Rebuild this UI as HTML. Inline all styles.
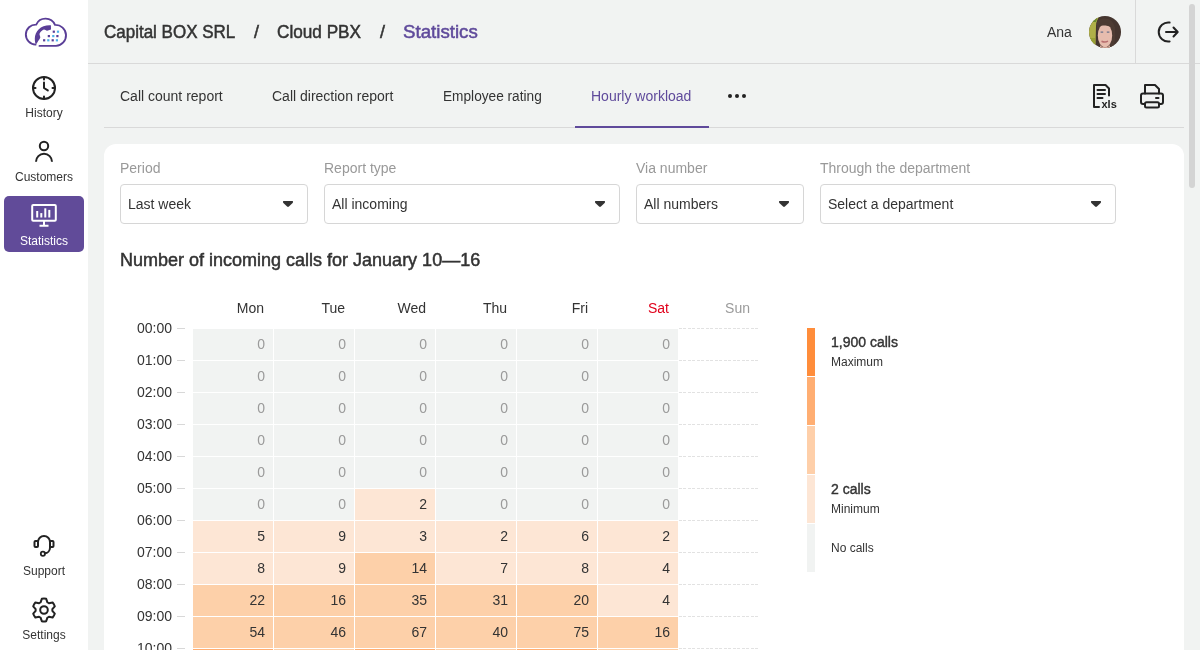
<!DOCTYPE html><html><head><meta charset="utf-8"><style>*{box-sizing:border-box;margin:0;padding:0}
html,body{width:1200px;height:650px;overflow:hidden}
body{background:#f1f3f2;font-family:"Liberation Sans",sans-serif;color:#333;position:relative}
#root{position:absolute;left:0;top:0;width:1200px;height:650px;will-change:transform;overflow:hidden}
#side{position:absolute;left:0;top:0;width:88px;height:650px;background:#fff}
.nav{position:absolute;left:4px;width:80px;height:56px;border-radius:5px}
.nav span{position:absolute;left:0;width:80px;text-align:center;font-size:12px;line-height:14px;color:#333;white-space:nowrap}
.nav.act{background:#614b99}
.nav.act span{color:#fff}
svg.ic{position:absolute;overflow:visible}
#hdr{position:absolute;left:88px;top:0;width:1112px;height:64px;border-bottom:1px solid #d9d9d9}
#vdiv{position:absolute;left:1135px;top:0;width:1px;height:63px;background:#d9d9d9}
.bc{position:absolute;top:21px;font-size:18px;line-height:22px;-webkit-text-stroke:0.5px #333;color:#333;white-space:nowrap;transform-origin:0 0}
.ana{position:absolute;left:1047px;top:24px;font-size:14px;line-height:16px;color:#333}
.tab{position:absolute;top:88px;font-size:14px;line-height:16px;color:#333;white-space:nowrap}
.tab.act{color:#5f4a9b}
#tabline{position:absolute;left:104px;top:127px;width:1080px;height:1px;background:#d9d9d9}
#tabul{position:absolute;left:575px;top:126px;width:134px;height:2px;background:#5f4a9b}
.dot{position:absolute;top:94px;width:4px;height:4px;border-radius:2px;background:#222}
#card{position:absolute;left:104px;top:144px;width:1080px;height:600px;background:#fff;border-radius:12px}
.lbl{position:absolute;top:160px;font-size:14px;line-height:16px;color:#999;white-space:nowrap}
.sel{position:absolute;top:184px;height:40px;border:1px solid #d6d6d6;border-radius:4px;background:#fff}
.sel span{position:absolute;left:7px;top:11px;font-size:14px;line-height:16px;color:#333;white-space:nowrap}
.sel svg{position:absolute;right:14px;top:16px}
#title{position:absolute;left:120px;top:249px;font-size:18px;line-height:22px;-webkit-text-stroke:0.5px #333;color:#333;white-space:nowrap}
.day{position:absolute;top:300px;width:80px;text-align:right;padding-right:9px;font-size:14px;line-height:16px;color:#333}
.hr{position:absolute;left:112px;width:60px;text-align:right;font-size:14px;line-height:16px;color:#333}
.tick{position:absolute;left:177px;width:8px;height:1px;background:#d8d8d8}
.c{position:absolute;width:80px;height:31px;text-align:right;padding-right:8px;font-size:14px;line-height:31px;color:#333}
.z{background:#f1f3f2;color:#9a9a9a}
.l1{background:#fde6d5}
.l2{background:#fdd0a9}
.l3{background:#ffae72}
.dash{position:absolute;left:679px;width:80px;height:1px;background:repeating-linear-gradient(90deg,#e2e2e2 0 3px,transparent 3px 4.5px)}
.seg{position:absolute;left:807px;width:8px;height:48px}
.lg1{position:absolute;left:831px;font-size:14px;line-height:16px;-webkit-text-stroke:0.4px #333;color:#333;white-space:nowrap}
.lg2{position:absolute;left:831px;font-size:12px;line-height:14px;color:#333;white-space:nowrap}
#sb{position:absolute;left:1189px;top:4px;width:6px;height:184px;border-radius:3px;background:#d4d4d4}
</style></head><body><div id="root">
<div id="side">
<svg class="ic" style="left:0;top:0" width="88" height="64" viewBox="0 0 88 64">
<path d="M39.5 45.9H56A10.4 10.4 0 1 0 55 24.9A10.3 10.3 0 0 0 36.2 24.6A10 10 0 0 0 35.5 44.6" fill="none" stroke="#5a3e97" stroke-width="1.9" stroke-linecap="round" stroke-linejoin="round"/>
<path d="M50.9 25.3C46.5 24.9 41.5 26.4 38.8 29.2C36.3 31.8 34.8 35 34.8 38.5C34.8 41 35.2 43 35.8 44.8L37.5 42.3C38.2 40.9 39.8 39.2 40.3 37.6C40.4 36.2 39.4 35 39.5 33.9C39.9 32.6 40.8 31.6 41.6 30.9C42.4 30.2 43.2 29.6 44 29.6C45 29.7 46 30.7 47.1 30.8L51 29.6Z" fill="#5a3e97"/>
<g fill="#5a3e97">
<rect x="52.7" y="30.6" width="2.2" height="2.2"/><rect x="47.75" y="35" width="2.2" height="2.2"/><rect x="56.3" y="35" width="2.2" height="2.2"/>
<rect x="43.05" y="39.2" width="2.2" height="2.2"/><rect x="51.6" y="39.2" width="2.2" height="2.2"/>
</g>
<g fill="#4cb2ea">
<rect x="56.9" y="30.6" width="2.2" height="2.2"/><rect x="52.2" y="35" width="2.2" height="2.2"/>
<rect x="47.2" y="39.2" width="2.2" height="2.2"/><rect x="55.8" y="39.2" width="2.2" height="2.2"/>
</g>
</svg>

<svg class="ic" style="left:0;top:0" width="88" height="650" viewBox="0 0 88 650">
<g fill="none" stroke="#222" stroke-width="2" stroke-linecap="round" stroke-linejoin="round">
<circle cx="44" cy="88" r="11"/>
<path d="M44 77.5v2M44 96.5v2M33.5 88h2M52.5 88h2"/>
<path d="M44 82.5v5.5l3.8 2.4"/>
<circle cx="44" cy="146" r="4.2"/>
<path d="M36 161.8a8 8 0 0 1 16 0" stroke-linecap="butt"/>
<path d="M38 541v2.5M50 541v7a5.5 5.5 0 0 1 -5.2 5.3"/>
<path d="M38 542a6 6 0 0 1 12 0"/>
<rect x="34.5" y="541" width="3.5" height="6" rx="1"/>
<rect x="50" y="541" width="3.5" height="6" rx="1"/>
<circle cx="42.9" cy="553.8" r="2.1" stroke-width="1.8"/>
<circle cx="44" cy="610" r="3.8"/>
<path d="M40.58 602.33L41.82 598.81A11.4 11.4 0 0 1 46.18 598.81L47.42 602.33A8.4 8.4 0 0 1 48.94 603.20L52.60 602.52A11.4 11.4 0 0 1 54.78 606.29L52.35 609.12A8.4 8.4 0 0 1 52.35 610.88L54.78 613.71A11.4 11.4 0 0 1 52.60 617.48L48.94 616.80A8.4 8.4 0 0 1 47.42 617.67L46.18 621.19A11.4 11.4 0 0 1 41.82 621.19L40.58 617.67A8.4 8.4 0 0 1 39.06 616.80L35.40 617.48A11.4 11.4 0 0 1 33.22 613.71L35.65 610.88A8.4 8.4 0 0 1 35.65 609.12L33.22 606.29A11.4 11.4 0 0 1 35.40 602.52L39.06 603.20A8.4 8.4 0 0 1 40.58 602.33Z"/>
</g>
</svg>
<div class="nav" style="top:68px"><span style="top:38px">History</span></div>
<div class="nav" style="top:132px"><span style="top:38px">Customers</span></div>
<div class="nav act" style="top:196px">
<svg class="ic" style="left:27px;top:8px" width="26" height="24" viewBox="0 0 26 24"><g fill="none" stroke="#fff" stroke-width="2"><rect x="1.2" y="1" width="23.6" height="15.8" rx="1"/><path d="M13 17v4M8.5 21.8h9"/></g><g fill="#fff"><rect x="5.2" y="7" width="2" height="6.5"/><rect x="9.3" y="9.1" width="2" height="4.4"/><rect x="13.3" y="4.3" width="2" height="9.2"/><rect x="17.3" y="5.9" width="2" height="7.6"/></g></svg>
<span style="top:38px">Statistics</span></div>
<div class="nav" style="top:526px"><span style="top:38px">Support</span></div>
<div class="nav" style="top:590px"><span style="top:38px">Settings</span></div>

</div>
<div id="hdr"></div>
<div class="bc" style="left:104px;transform:scaleX(0.944)">Capital BOX SRL</div>
<div class="bc" style="left:254px">/</div>
<div class="bc" style="left:277px;transform:scaleX(0.954)">Cloud PBX</div>
<div class="bc" style="left:380px">/</div>
<div class="bc" style="left:403px;color:#5f4a9b;-webkit-text-stroke-color:#5f4a9b;transform:scaleX(1.038)">Statistics</div>
<div class="ana">Ana</div>
<div id="vdiv"></div>
<svg class="ic" style="left:0;top:0" width="1200" height="130" viewBox="0 0 1200 130">
<defs><clipPath id="av"><circle cx="1105" cy="32" r="16"/></clipPath></defs>
<g clip-path="url(#av)">
<rect x="1089" y="16" width="32" height="32" fill="#45352f"/>
<path d="M1089 16h11c-3 3-3.5 6-4 10l-0.5 22h-6.5z" fill="#b0b048"/>
<path d="M1089 16h9l-2 6h-7z" fill="#6b8a30"/>
<path d="M1089 38h6v10h-6z" fill="#98a035"/>
<path d="M1096.5 23c2-5 11-6 15-2c3 3 4 8 3.5 13l-1 14h-15z" fill="#4d3b33"/>
<ellipse cx="1105" cy="35.5" rx="7.2" ry="11.5" fill="#e6bcae"/>
<path d="M1100 45c2 3 8 3 10 0v4h-10z" fill="#e0b0a2"/>
<path d="M1098 26c3-5 12-5 14 1c-4-1.5-9-2-14-1z" fill="#4d3b33"/>
<path d="M1112 27q1.5 6 0.5 16l2.5-2v-14z" fill="#4d3b33"/>
<path d="M1100.6 32.2h2.6M1106.8 32.2h2.6" stroke="#68708a" stroke-width="1.3"/>
<path d="M1101.5 41.2q3.5 1.6 6.5 0" stroke="#b86f70" stroke-width="1.5" fill="none"/>
</g>
<g fill="none" stroke="#222" stroke-width="2" stroke-linecap="round" stroke-linejoin="round">
<path d="M1169.6 22.6A9.5 9.5 0 1 0 1169.6 41.4"/>
<path d="M1166 32h11.5M1173.5 27.5l4.2 4.5l-4.2 4.5"/>
<path d="M1099 107H1094V85H1105.5L1109 88.5V95.5"/>
<path d="M1097.5 90h7.5M1097.5 94h7.5M1097.5 98h5"/>
<path d="M1145 93.5V85H1155L1159 89V93.5"/>
<rect x="1141" y="93.5" width="22" height="10.5" rx="2"/>
<rect x="1145" y="102.2" width="14" height="5.2" rx="1.5" fill="#f1f3f2"/>
<path d="M1156 98h2.5"/>
</g>
<text x="1101.5" y="107.5" font-family="Liberation Sans" font-weight="bold" font-size="11" fill="#222">xls</text>
</svg>

<div id="tabline"></div>
<div class="tab" style="left:120px">Call count report</div>
<div class="tab" style="left:272px">Call direction report</div>
<div class="tab" style="left:443px;transform:scaleX(0.976);transform-origin:0 0">Employee rating</div>
<div class="tab act" style="left:591px">Hourly workload</div>
<div id="tabul"></div>
<div class="dot" style="left:728px"></div>
<div class="dot" style="left:735px"></div>
<div class="dot" style="left:742px"></div>
<div id="card"></div>
<div class="lbl" style="left:120px">Period</div>
<div class="sel" style="left:120px;width:188px"><span>Last week</span><svg width="10" height="6" viewBox="0 0 10 6"><path d="M0.1 0H9.9V1.7L5.9 5.5Q5 6.3 4.1 5.5L0.1 1.7Z" fill="#333"/></svg></div>
<div class="lbl" style="left:324px">Report type</div>
<div class="sel" style="left:324px;width:296px"><span>All incoming</span><svg width="10" height="6" viewBox="0 0 10 6"><path d="M0.1 0H9.9V1.7L5.9 5.5Q5 6.3 4.1 5.5L0.1 1.7Z" fill="#333"/></svg></div>
<div class="lbl" style="left:636px">Via number</div>
<div class="sel" style="left:636px;width:168px"><span>All numbers</span><svg width="10" height="6" viewBox="0 0 10 6"><path d="M0.1 0H9.9V1.7L5.9 5.5Q5 6.3 4.1 5.5L0.1 1.7Z" fill="#333"/></svg></div>
<div class="lbl" style="left:820px">Through the department</div>
<div class="sel" style="left:820px;width:296px"><span>Select a department</span><svg width="10" height="6" viewBox="0 0 10 6"><path d="M0.1 0H9.9V1.7L5.9 5.5Q5 6.3 4.1 5.5L0.1 1.7Z" fill="#333"/></svg></div>
<div id="title">Number of incoming calls for January 10—16</div>
<div class="day" style="left:193px;">Mon</div>
<div class="day" style="left:274px;">Tue</div>
<div class="day" style="left:355px;">Wed</div>
<div class="day" style="left:436px;">Thu</div>
<div class="day" style="left:517px;">Fri</div>
<div class="day" style="left:598px;color:#e1001b;">Sat</div>
<div class="day" style="left:679px;color:#9b9b9b;">Sun</div>
<div class="hr" style="top:320px">00:00</div>
<div class="tick" style="top:328px"></div>
<div class="dash" style="top:328px"></div>
<div class="c z" style="left:193px;top:329px">0</div>
<div class="c z" style="left:274px;top:329px">0</div>
<div class="c z" style="left:355px;top:329px">0</div>
<div class="c z" style="left:436px;top:329px">0</div>
<div class="c z" style="left:517px;top:329px">0</div>
<div class="c z" style="left:598px;top:329px">0</div>
<div class="hr" style="top:352px">01:00</div>
<div class="tick" style="top:360px"></div>
<div class="dash" style="top:360px"></div>
<div class="c z" style="left:193px;top:361px">0</div>
<div class="c z" style="left:274px;top:361px">0</div>
<div class="c z" style="left:355px;top:361px">0</div>
<div class="c z" style="left:436px;top:361px">0</div>
<div class="c z" style="left:517px;top:361px">0</div>
<div class="c z" style="left:598px;top:361px">0</div>
<div class="hr" style="top:384px">02:00</div>
<div class="tick" style="top:392px"></div>
<div class="dash" style="top:392px"></div>
<div class="c z" style="left:193px;top:393px">0</div>
<div class="c z" style="left:274px;top:393px">0</div>
<div class="c z" style="left:355px;top:393px">0</div>
<div class="c z" style="left:436px;top:393px">0</div>
<div class="c z" style="left:517px;top:393px">0</div>
<div class="c z" style="left:598px;top:393px">0</div>
<div class="hr" style="top:416px">03:00</div>
<div class="tick" style="top:424px"></div>
<div class="dash" style="top:424px"></div>
<div class="c z" style="left:193px;top:425px">0</div>
<div class="c z" style="left:274px;top:425px">0</div>
<div class="c z" style="left:355px;top:425px">0</div>
<div class="c z" style="left:436px;top:425px">0</div>
<div class="c z" style="left:517px;top:425px">0</div>
<div class="c z" style="left:598px;top:425px">0</div>
<div class="hr" style="top:448px">04:00</div>
<div class="tick" style="top:456px"></div>
<div class="dash" style="top:456px"></div>
<div class="c z" style="left:193px;top:457px">0</div>
<div class="c z" style="left:274px;top:457px">0</div>
<div class="c z" style="left:355px;top:457px">0</div>
<div class="c z" style="left:436px;top:457px">0</div>
<div class="c z" style="left:517px;top:457px">0</div>
<div class="c z" style="left:598px;top:457px">0</div>
<div class="hr" style="top:480px">05:00</div>
<div class="tick" style="top:488px"></div>
<div class="dash" style="top:488px"></div>
<div class="c z" style="left:193px;top:489px">0</div>
<div class="c z" style="left:274px;top:489px">0</div>
<div class="c l1" style="left:355px;top:489px">2</div>
<div class="c z" style="left:436px;top:489px">0</div>
<div class="c z" style="left:517px;top:489px">0</div>
<div class="c z" style="left:598px;top:489px">0</div>
<div class="hr" style="top:512px">06:00</div>
<div class="tick" style="top:520px"></div>
<div class="dash" style="top:520px"></div>
<div class="c l1" style="left:193px;top:521px">5</div>
<div class="c l1" style="left:274px;top:521px">9</div>
<div class="c l1" style="left:355px;top:521px">3</div>
<div class="c l1" style="left:436px;top:521px">2</div>
<div class="c l1" style="left:517px;top:521px">6</div>
<div class="c l1" style="left:598px;top:521px">2</div>
<div class="hr" style="top:544px">07:00</div>
<div class="tick" style="top:552px"></div>
<div class="dash" style="top:552px"></div>
<div class="c l1" style="left:193px;top:553px">8</div>
<div class="c l1" style="left:274px;top:553px">9</div>
<div class="c l2" style="left:355px;top:553px">14</div>
<div class="c l1" style="left:436px;top:553px">7</div>
<div class="c l1" style="left:517px;top:553px">8</div>
<div class="c l1" style="left:598px;top:553px">4</div>
<div class="hr" style="top:576px">08:00</div>
<div class="tick" style="top:584px"></div>
<div class="dash" style="top:584px"></div>
<div class="c l2" style="left:193px;top:585px">22</div>
<div class="c l2" style="left:274px;top:585px">16</div>
<div class="c l2" style="left:355px;top:585px">35</div>
<div class="c l2" style="left:436px;top:585px">31</div>
<div class="c l2" style="left:517px;top:585px">20</div>
<div class="c l1" style="left:598px;top:585px">4</div>
<div class="hr" style="top:608px">09:00</div>
<div class="tick" style="top:616px"></div>
<div class="dash" style="top:616px"></div>
<div class="c l2" style="left:193px;top:617px">54</div>
<div class="c l2" style="left:274px;top:617px">46</div>
<div class="c l2" style="left:355px;top:617px">67</div>
<div class="c l2" style="left:436px;top:617px">40</div>
<div class="c l2" style="left:517px;top:617px">75</div>
<div class="c l2" style="left:598px;top:617px">16</div>
<div class="hr" style="top:640px">10:00</div>
<div class="tick" style="top:648px"></div>
<div class="dash" style="top:648px"></div>
<div class="c l3" style="left:193px;top:649px"></div>
<div class="c l2" style="left:274px;top:649px"></div>
<div class="c l3" style="left:355px;top:649px"></div>
<div class="c l2" style="left:436px;top:649px"></div>
<div class="c l3" style="left:517px;top:649px"></div>
<div class="c l2" style="left:598px;top:649px"></div>
<div class="seg" style="top:328px;background:#ff8d3b"></div>
<div class="seg" style="top:377px;background:#ffae72"></div>
<div class="seg" style="top:426px;background:#fecfa9"></div>
<div class="seg" style="top:475px;background:#fde6d5"></div>
<div class="seg" style="top:524px;background:#f1f3f2"></div>
<div class="lg1" style="top:334px">1,900 calls</div>
<div class="lg2" style="top:355px">Maximum</div>
<div class="lg1" style="top:481px">2 calls</div>
<div class="lg2" style="top:502px">Minimum</div>
<div class="lg2" style="top:541px">No calls</div>
<div id="sb"></div>
</div></body></html>
